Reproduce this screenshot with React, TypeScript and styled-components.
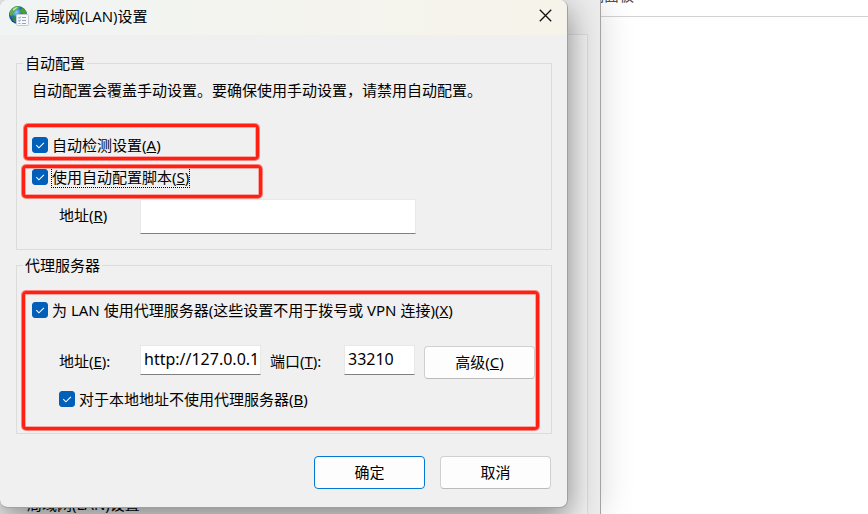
import React, { useState } from "react";
import styled, { createGlobalStyle } from "styled-components";

const GlobalStyle = createGlobalStyle`
  *, *::before, *::after { box-sizing: border-box; }
  body { margin: 0; background: #ffffff; }
  body, button, input {
    font-family: "Noto Sans", "Noto Sans CJK SC", sans-serif;
    font-size: 15px;
    line-height: 20px;
    color: #000000;
  }
`;

const Desktop = styled.main`
  position: relative;
  min-height: 100vh;
  overflow: hidden;
  background: #ffffff;
`;

const ControlPanel = styled.header`
  display: flex;
  align-items: flex-end;
  height: 17px;
  padding: 0 0 11px 574px;
  border-bottom: 1px solid #d2d2d2;
`;

const ControlPanelTitle = styled.span`
  color: #505050;
`;

const PropertiesWindow = styled.section`
  position: absolute;
  top: 0;
  bottom: 0;
  left: 0;
  width: 601px;
  padding: 34px 12px 0 0;
  background: #ececec;
  border-right: 1px solid #a4a4a4;
  box-shadow: 2px 0 32px rgba(0, 0, 0, 0.14);
`;

const PropertiesPage = styled.div`
  display: flex;
  align-items: flex-end;
  height: 100%;
  padding: 0 0 0 27px;
  background: #f2f2f2;
  border: 1px solid #dcdcdc;
  border-width: 1px 1px 0 0;
`;

const Dialog = styled.form`
  position: absolute;
  top: 0;
  left: 0;
  width: 568px;
  overflow: hidden;
  background: #f0f0f0;
  border-right: 1px solid #a0a0a0;
  border-bottom: 1px solid #a0a0a0;
  border-radius: 8px;
  box-shadow: 0 10px 32px rgba(0, 0, 0, 0.46);
`;

const TitleBar = styled.header`
  display: flex;
  align-items: center;
  gap: 6px;
  height: 35px;
  padding: 0 12px 4px 9px;
  background: linear-gradient(90deg, #f0f4f4 0%, #f3f4f0 35%, #f6f3ea 100%);
`;

const Title = styled.h1`
  flex: 1;
  margin: 0;
  font-family: "Open Sans", "Noto Sans CJK SC", sans-serif;
  font-size: 15px;
  font-weight: 400;
`;

const CloseButton = styled.button`
  display: flex;
  padding: 3px;
  background: none;
  border: 0;
`;

const DialogBody = styled.div`
  display: flex;
  flex-direction: column;
  gap: 5px;
  padding: 18px 15px 18px 16px;
`;

const Group = styled.fieldset<{ $top: number; $bottom: number }>`
  min-width: 0;
  margin: 0;
  padding: ${(p) => p.$top}px 15px ${(p) => p.$bottom}px;
  border: 1px solid #dcdcdc;
`;

const Legend = styled.legend`
  margin-left: -9px;
  padding: 0 2px;
`;

const Description = styled.p`
  margin: 0 0 35px;
`;

const Stack = styled.div<{ $gap: number }>`
  position: relative;
  display: flex;
  flex-direction: column;
  gap: ${(p) => p.$gap}px;
`;

const OptionRow = styled.div<{ $indent?: boolean }>`
  position: relative;
  display: flex;
  padding-left: ${(p) => (p.$indent ? 27 : 0)}px;
`;

const OptionLabel = styled.label`
  display: flex;
  align-items: center;
  gap: 4px;
`;

const OptionText = styled.span<{ $focused?: boolean }>`
  outline: ${(p) => (p.$focused ? "1px dotted #000000" : "none")};
`;

const Tick = styled.span`
  display: grid;
  width: 16px;
  height: 16px;

  > * { grid-area: 1 / 1; }
  > svg { pointer-events: none; }
`;

const TickInput = styled.input`
  appearance: none;
  width: 16px;
  height: 16px;
  margin: 0;
  border: 1px solid #868686;
  border-radius: 3px;
  background: #ffffff;

  &:checked { background: #005fb8; border-color: #005fb8; }
  & + svg { visibility: hidden; }
  &:checked + svg { visibility: visible; }
`;

const FieldRow = styled.div`
  display: grid;
  grid-template-columns: 81px 1fr;
  padding-left: 27px;
`;

const ServerRow = styled.div`
  display: grid;
  grid-template-columns: 81px 121px 83px 71px 1fr;
  align-items: start;
  margin-top: 15px;
  padding-left: 27px;
`;

const FieldLabel = styled.label<{ $inset?: boolean }>`
  padding: 6px 0 0 ${(p) => (p.$inset ? 9 : 0)}px;
  white-space: nowrap;
`;

const TextBox = styled.input<{ $tall?: boolean }>`
  width: 100%;
  max-width: 276px;
  height: ${(p) => (p.$tall ? 35 : 30)}px;
  padding: 0 0 3px 3px;
  font-size: 16px;
  background: #ffffff;
  border: 1px solid #e8e8e8;
  border-bottom-color: #808080;
  border-radius: 0;
  outline: none;
`;

const PushButton = styled.button<{ $primary?: boolean }>`
  width: 111px;
  height: 33px;
  padding: 0 0 2px;
  background: #fdfdfd;
  border: 1px solid ${(p) => (p.$primary ? "#0078d4" : "#d0d0d0")};
  border-bottom-color: ${(p) => (p.$primary ? "#0078d4" : "#bbbbbb")};
  border-radius: 4px;
`;

const AdvancedButton = styled(PushButton)`
  justify-self: end;
  margin: 1px 1px 0 0;
`;

const Actions = styled.footer`
  display: flex;
  justify-content: flex-end;
  gap: 15px;
  padding: 17px 1px 0 0;
`;

const Marker = styled.span<{ $inset: string }>`
  position: absolute;
  inset: ${(p) => p.$inset};
  border: 3px solid #ff2014;
  border-radius: 4px;
  box-shadow: 0 0 0 1px rgba(255, 60, 50, 0.6), inset 0 0 0 1px rgba(255, 60, 50, 0.4);
  pointer-events: none;
`;

function NetworkIcon() {
  return (
    <svg width="20" height="20" viewBox="0 0 20 20" aria-hidden="true">
      <defs>
        <radialGradient id="sea" cx="40%" cy="35%" r="65%">
          <stop offset="0" stopColor="#8fd0f6" />
          <stop offset="0.45" stopColor="#2673c4" />
          <stop offset="1" stopColor="#0a2c7c" />
        </radialGradient>
      </defs>
      <circle cx="9" cy="9" r="9" fill="url(#sea)" />
      <path d="M1 6Q3 1 8 0L11 1 9 3 7 4 6 6 4 7 3 10 1 9Z" fill="#5fae42" />
      <path d="M12 1Q17 3 18 8L15 9 13 7 11 6 11 4 13 3Z" fill="#48a032" />
      <path d="M4 10L7 11 8 14 7 17 4 15 3 12Z" fill="#2f8540" />
      <path d="M4 3Q6 1 9 1L7 3 4 5Z" fill="#c4e8a4" />
      <rect x="7.500" y="8.500" width="12" height="11" rx="1" fill="#f7f8fa" stroke="#c3c9d1" />
      <path d="M9.500 11.500l.8.8 1.300-1.600M9.500 14.500l.8.8 1.300-1.600" fill="none" stroke="#4c8aca" />
      <path d="M13 11.500h4M13 14.500h4M13 17.500h4M9.500 17.500h2" stroke="#9aa5b3" />
    </svg>
  );
}

function CloseIcon() {
  return (
    <svg width="13" height="13" viewBox="0 0 13 13" aria-hidden="true">
      <path d="M.8.8l11.400 11.400M12.200.8L.8 12.200" stroke="#111" strokeWidth="1.300" />
    </svg>
  );
}

function CheckIcon() {
  return (
    <svg width="16" height="16" viewBox="0 0 16 16" aria-hidden="true">
      <path d="M4.300 8.200l2.600 2.600 5-5" fill="none" stroke="#fff" strokeWidth="1.100" />
    </svg>
  );
}

interface OptionProps {
  text: string;
  accessKey: string;
  focused?: boolean;
  indent?: boolean;
  children?: React.ReactNode;
}

function Option({ text, accessKey, focused, indent, children }: OptionProps) {
  const [checked, setChecked] = useState(true);
  return (
    <OptionRow $indent={indent}>
      <OptionLabel>
        <Tick>
          <TickInput
            type="checkbox"
            checked={checked}
            onChange={(e) => setChecked(e.target.checked)}
          />
          <CheckIcon />
        </Tick>
        <OptionText $focused={focused}>
          {text}(<u>{accessKey}</u>)
        </OptionText>
      </OptionLabel>
      {children}
    </OptionRow>
  );
}

export default function App() {
  return (
    <>
      <GlobalStyle />
      <Desktop>
        <ControlPanel>
          <ControlPanelTitle>控制面板</ControlPanelTitle>
        </ControlPanel>
        <PropertiesWindow>
          <PropertiesPage>局域网(LAN)设置</PropertiesPage>
        </PropertiesWindow>
        <Dialog role="dialog" aria-labelledby="title" onSubmit={(e) => e.preventDefault()}>
          <TitleBar>
            <NetworkIcon />
            <Title id="title">局域网(LAN)设置</Title>
            <CloseButton type="button" aria-label="关闭">
              <CloseIcon />
            </CloseButton>
          </TitleBar>
          <DialogBody>
            <Group $top={7} $bottom={15}>
              <Legend>自动配置</Legend>
              <Description>自动配置会覆盖手动设置。要确保使用手动设置，请禁用自动配置。</Description>
              <Stack $gap={12}>
                <Option text="自动检测设置" accessKey="A">
                  <Marker $inset="-11px 277px -5px -8px" />
                </Option>
                <Option text="使用自动配置脚本" accessKey="S" focused>
                  <Marker $inset="-2px 274px -11px -10px" />
                </Option>
                <FieldRow>
                  <FieldLabel htmlFor="script">
                    地址(<u>R</u>)
                  </FieldLabel>
                  <TextBox id="script" type="text" $tall />
                </FieldRow>
              </Stack>
            </Group>
            <Group $top={25} $bottom={24}>
              <Legend>代理服务器</Legend>
              <Stack $gap={10}>
                <Option text="为 LAN 使用代理服务器(这些设置不用于拨号或 VPN 连接)" accessKey="X" />
                <ServerRow>
                  <FieldLabel htmlFor="address">
                    地址(<u>E</u>):
                  </FieldLabel>
                  <TextBox id="address" type="text" defaultValue="http://127.0.0.1" />
                  <FieldLabel htmlFor="port" $inset>
                    端口(<u>T</u>):
                  </FieldLabel>
                  <TextBox id="port" type="text" defaultValue="33210" />
                  <AdvancedButton type="button">
                    高级(<u>C</u>)
                  </AdvancedButton>
                </ServerRow>
                <Option text="对于本地地址不使用代理服务器" accessKey="B" indent />
                <Marker $inset="-9px -3px -21px -10px" />
              </Stack>
            </Group>
            <Actions>
              <PushButton type="submit" $primary>
                确定
              </PushButton>
              <PushButton type="button">取消</PushButton>
            </Actions>
          </DialogBody>
        </Dialog>
      </Desktop>
    </>
  );
}
